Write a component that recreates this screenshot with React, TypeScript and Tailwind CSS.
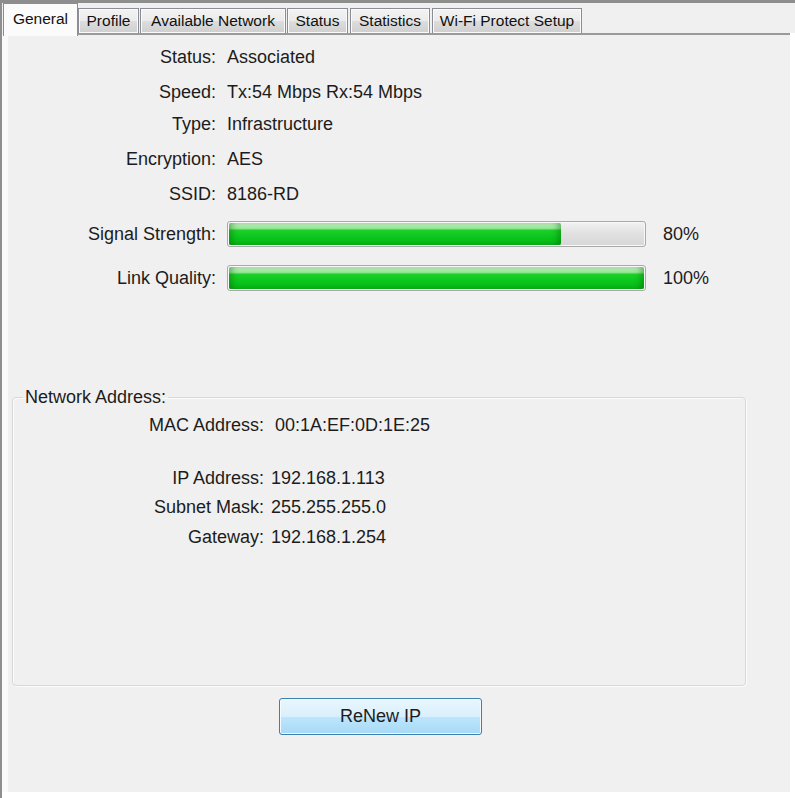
import React from "react";

const tabs = [
  { label: "General", cls: "w-[75px]", sel: true },
  { label: "Profile", cls: "w-[61px]" },
  { label: "Available Network", cls: "w-[146px] ml-[1px]" },
  { label: "Status", cls: "w-[61px] ml-[1px]" },
  { label: "Statistics", cls: "w-[80px] ml-[2px]" },
  { label: "Wi-Fi Protect Setup", cls: "w-[150px] ml-[2px]" },
];

function Row({ label, value, top }: { label: string; value: string; top: string }) {
  return (
    <div className={`flex h-[24px] items-center ${top}`}>
      <div className="w-[208px] text-right">{label}</div>
      <div className="ml-[11px]">{value}</div>
    </div>
  );
}

function Bar({ label, pct, top }: { label: string; pct: number; top: string }) {
  return (
    <div className={`flex h-[26px] items-center ${top}`}>
      <div className="w-[208px] text-right">{label}</div>
      <div className="ml-[11px] h-[26px] w-[419px] rounded-[3px] border border-[#a9a9a9] bg-[linear-gradient(to_bottom,#f2f2f2_0%,#e2e2e2_45%,#d6d6d6_100%)] p-[1px] shadow-[inset_0_0_0_1px_#f8f8f8]">
        <div
          className="h-full rounded-[2px] bg-[linear-gradient(to_bottom,#c2f2c2_0%,#98e698_24%,#1ccf28_34%,#08c41a_70%,#0bb319_100%)] shadow-[inset_6px_0_6px_-3px_rgba(0,90,0,0.4),inset_-6px_0_6px_-3px_rgba(0,90,0,0.4)]"
          style={{ width: `${pct}%` }}
        />
      </div>
      <div className="ml-[17px]">{pct}%</div>
    </div>
  );
}

function AddrRow({ label, value, top, gap = "ml-[7px]" }: { label: string; value: string; top: string; gap?: string }) {
  return (
    <div className={`flex h-[24px] items-center ${top}`}>
      <div className="w-[251px] text-right">{label}</div>
      <div className={gap}>{value}</div>
    </div>
  );
}

export default function App() {
  return (
    <div
      className="flex h-[798px] w-[795px] flex-col border-l-[2px] border-[#8e8e8e] bg-white text-[18px] text-[#1c1c1c]"
      style={{ fontFamily: '"Liberation Sans", Arial, sans-serif' }}
    >
      <div className="flex h-[33px] items-end border-t-[3px] border-[#8e8e8e] bg-[#f0f0f0] pl-[1px]">
        {tabs.map((t) =>
          t.sel ? (
            <div
              key={t.label}
              className={`relative z-10 -mb-[3px] flex h-[33px] ${t.cls} items-start justify-center border-x border-t border-[#8a8d95] bg-[#fbfbfb] pt-[3px] text-[15.5px] text-[#111]`}
            >
              {t.label}
            </div>
          ) : (
            <div
              key={t.label}
              className={`flex h-[25px] ${t.cls} items-center justify-center border border-b-0 border-[#8a8d95] bg-[linear-gradient(to_bottom,#f3f3f3_0%,#ebebeb_50%,#dddddd_51%,#cfcfcf_100%)] text-[15.5px] text-[#111] shadow-[inset_0_0_0_1px_#fafafa]`}
            >
              {t.label}
            </div>
          )
        )}
      </div>
      <div className="flex h-[759px] w-[788px] flex-col border-l-[6px] border-t-[2px] border-l-[#fafafa] border-t-[#9a9a9a] bg-[#f0f0f0]">
        <Row label="Status:" value="Associated" top="mt-[10px]" />
        <Row label="Speed:" value="Tx:54 Mbps Rx:54 Mbps" top="mt-[11px]" />
        <Row label="Type:" value="Infrastructure" top="mt-[8px]" />
        <Row label="Encryption:" value="AES" top="mt-[11px]" />
        <Row label="SSID:" value="8186-RD" top="mt-[11px]" />
        <Bar label="Signal Strength:" pct={80} top="mt-[15px]" />
        <Bar label="Link Quality:" pct={100} top="mt-[18px]" />
        <fieldset className="ml-[4px] mt-[94px] h-[301px] w-[734px] rounded-[4px] border border-[#d6d8da] shadow-[inset_1px_1px_0_#fbfbfb,1px_1px_0_#fbfbfb]">
          <legend className="ml-[10px] h-[24px] px-[2px] leading-[24px]">Network Address:</legend>
          <AddrRow label="MAC Address:" value="00:1A:EF:0D:1E:25" top="mt-[4px]" gap="ml-[11px]" />
          <AddrRow label="IP Address:" value="192.168.1.113" top="mt-[29px]" />
          <AddrRow label="Subnet Mask:" value="255.255.255.0" top="mt-[5px]" />
          <AddrRow label="Gateway:" value="192.168.1.254" top="mt-[6px]" />
        </fieldset>
        <button className="ml-[271px] mt-[12px] h-[37px] w-[203px] rounded-[3px] border border-[#3c7fb1] bg-[linear-gradient(to_bottom,#eaf6fd_0%,#d9f0fc_50%,#bee6fd_51%,#a7d9f5_100%)] text-[18px] text-[#1c1c1c] shadow-[inset_0_0_0_1px_#f4fbff]">
          ReNew IP
        </button>
      </div>
    </div>
  );
}
